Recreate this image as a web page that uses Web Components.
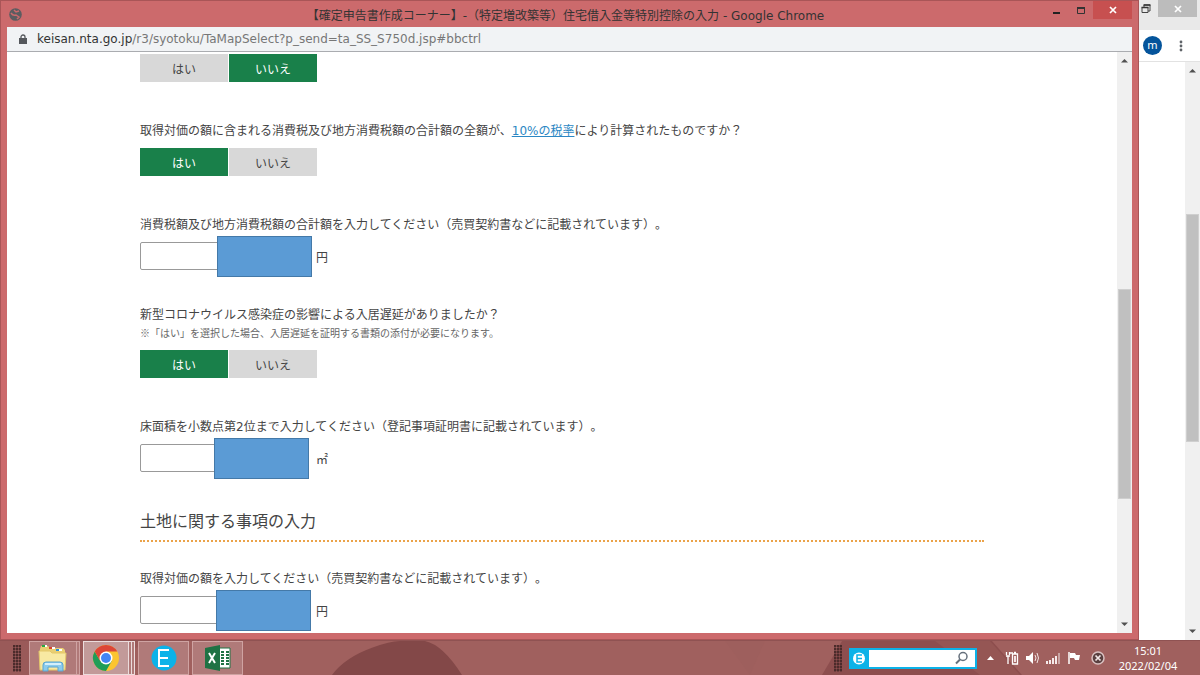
<!DOCTYPE html>
<html lang="ja">
<head>
<meta charset="utf-8">
<title>確定申告書作成コーナー</title>
<style>
    html, body {
        height: 100%;
        margin: 0;
        overflow: hidden;
    }

    body {
        display: flex;
        flex-direction: column;
        font-family: "DejaVu Sans", "Noto Sans CJK JP", sans-serif;
        font-size: 12px;
        text-spacing-trim: space-all;
        text-autospace: no-autospace;
        color: #444;
    }

    main {
        flex: 1;
        min-height: 0;
        display: flex;
    }
</style>
</head>
<body>
<main>
    <popup-window>
        <span slot="title">【確定申告書作成コーナー】-（特定増改築等）住宅借入金等特別控除の入力 - Google Chrome</span>
        <span slot="host">keisan.nta.go.jp</span>
        <span slot="path">/r3/syotoku/TaMapSelect?p_send=ta_SS_S750d.jsp#bbctrl</span>
        <yes-no value="no"></yes-no>
        <yes-no value="yes">取得対価の額に含まれる消費税及び地方消費税額の合計額の全額が、<text-link>10%の税率</text-link>により計算されたものですか？</yes-no>
        <amount-field unit="円" style="--cover: 77px">消費税額及び地方消費税額の合計額を入力してください（売買契約書などに記載されています）。</amount-field>
        <yes-no value="yes">新型コロナウイルス感染症の影響による入居遅延がありましたか？<span slot="note">※「はい」を選択した場合、入居遅延を証明する書類の添付が必要になります。</span></yes-no>
        <amount-field unit="㎡" style="--cover: 74px">床面積を小数点第2位まで入力してください（登記事項証明書に記載されています）。</amount-field>
        <section-title>土地に関する事項の入力</section-title>
        <amount-field unit="円" style="--cover: 76px">取得対価の額を入力してください（売買契約書などに記載されています）。</amount-field>
    </popup-window>
    <back-window></back-window>
</main>
<task-bar>
    <task-button stack="1" label="エクスプローラー">
        <svg width="32" height="28" viewBox="0 0 32 28">
            <path d="M3 5l1-3h7l2 2h13l2 2v19H3z" fill="#e9cf72"/>
            <path d="M5 2h5M12 4h6M19 6h6" stroke="#fff" stroke-width="2"/>
            <path d="M5 2h3" stroke="#27a844" stroke-width="2"/>
            <path d="M12 4h3" stroke="#d8432f" stroke-width="2"/>
            <path d="M19 6h3" stroke="#2c8fdc" stroke-width="2"/>
            <path d="M2 7h11l2 2h14l-1 17H3z" fill="#f8e9a2" stroke="#e3c768"/>
            <path d="M6 27v-6q0-3 3-3h14q3 0 3 3v6h-5v-4H11v4z" fill="#8bcbec" stroke="#5aa5d0"/>
            <path d="M8 20h16" stroke="#d3effb" stroke-width="2"/>
        </svg>
    </task-button>
    <task-button stack="2" active label="Google Chrome">
        <svg width="28" height="28" viewBox="0 0 28 28">
            <circle cx="14" cy="14" r="13" fill="#fbc530"/>
            <path d="M2.700 7.500A13 13 0 0 0 14 27l5.600-9.700L14 14 8.400 17.300z" fill="#1f9d58"/>
            <path d="M2.700 7.500A13 13 0 0 1 25.300 7.500H14L8.400 17.300z" fill="#dc4637"/>
            <circle cx="14" cy="14" r="6.500" fill="#fff"/>
            <circle cx="14" cy="14" r="5" fill="#4385f4"/>
        </svg>
    </task-button>
    <task-button label="E">
        <svg width="26" height="26" viewBox="0 0 26 26">
            <circle cx="13" cy="13" r="12.500" fill="#0cb2e8"/>
            <path d="M18 5H8v16h10M8 13h9" fill="none" stroke="#fff" stroke-width="2"/>
        </svg>
    </task-button>
    <task-button label="Excel">
        <svg width="28" height="28" viewBox="0 0 28 28">
            <path d="M14 4h12v20H14z" fill="#fff" stroke="#1f7244"/>
            <path d="M17 8h3M22 8h3M17 11h3M22 11h3M17 14h3M22 14h3M17 17h3M22 17h3M17 20h3M22 20h3" stroke="#1f7244" stroke-width="2"/>
            <path d="M1 4l15-3v26L1 24z" fill="#1f7244"/>
            <path d="M5 9l6 10M11 9L5 19" stroke="#fff" stroke-width="2"/>
        </svg>
    </task-button>
</task-bar>

<script>
function define(name, html, setup) {
    const template = document.createElement('template');
    template.innerHTML = html;

    window.customElements.define(name, class extends HTMLElement {
        constructor() {
            super();
            this.attachShadow({mode: 'open'})
            this.shadowRoot.appendChild(template.content.cloneNode(true))
        }

        connectedCallback() {
            if (setup) setup(this, this.shadowRoot);
        }
    });
}

// before / size / after are the shares of the track
define('scroll-bar', `
    <style>
        :host {
            display: flex;
            flex-direction: column;
            align-items: center;
            box-sizing: border-box;
            flex: 0 0 15px;
            padding: 6px 0;
            background: #f0f0f0;
        }
        svg { display: block; }
        .track {
            flex: 1;
            display: flex;
            flex-direction: column;
            align-self: stretch;
            padding: 2px 1px;
        }
        .thumb { background: #c0c0c0; border: 1px solid #cfcfcf; box-sizing: border-box; }
    </style>
    <svg width="7" height="5"><path d="M0 4.500L3.500 1 7 4.500z" fill="#505050"/></svg>
    <div class="track"><div class="before"></div><div class="thumb"></div><div class="after"></div></div>
    <svg width="7" height="5"><path d="M0 .5L3.500 4 7 .5z" fill="#505050"/></svg>
`, (el, root) => {
    root.querySelector('.before').style.flex = el.getAttribute('before');
    root.querySelector('.thumb').style.flex = el.getAttribute('size');
    root.querySelector('.after').style.flex = el.getAttribute('after');
});

define('text-link', `<style>a { color: #2b87c4; text-decoration: underline; }</style><a href="#"><slot></slot></a>`);

define('yes-no', `
    <style>
        :host { display: block; margin-bottom: 40px; }
        .question, .note { line-height: 18px; }
        .note { font-family: "Noto Sans CJK JP", sans-serif; font-size: 10px; color: #666; }
        .buttons { display: flex; gap: 1px; }
        .question + .note + .buttons { margin-top: 8px; }
        :host(:empty) .buttons { margin-top: 0; }
        button {
            width: 88px;
            height: 28px;
            padding: 0;
            border: 0;
            background: #d8d8d8;
            color: #444;
            font: inherit;
        }
        button.on { background: #19804a; color: #fff; }
    </style>
    <div class="question" id="question"><slot></slot></div>
    <div class="note"><slot name="note"></slot></div>
    <div class="buttons" role="group" aria-labelledby="question">
        <button type="button" data-value="yes">はい</button>
        <button type="button" data-value="no">いいえ</button>
    </div>
`, (el, root) => {
    const buttons = root.querySelectorAll('button');
    const select = value => {
        buttons.forEach(b => {
            b.classList.toggle('on', b.dataset.value === value);
            b.setAttribute('aria-pressed', b.dataset.value === value);
        })
    }
    buttons.forEach(b => b.addEventListener('click', () => select(b.dataset.value)));
    select(el.getAttribute('value'));
});

define('amount-field', `
    <style>
        :host { display: block; margin-bottom: 36px; }
        label { display: block; line-height: 18px; margin-bottom: 8px; }
        .row { position: relative; display: flex; align-items: center; gap: 7px; }
        input {
            box-sizing: border-box;
            width: 169px;
            height: 28px;
            border: 1px solid #999;
            border-radius: 2px;
            font: inherit;
        }
        .cover {
            position: absolute;
            left: var(--cover);
            top: -6px;
            box-sizing: border-box;
            width: 95px;
            height: 41px;
            background: #5b9bd5;
            border: 1px solid #4479a8;
        }
    </style>
    <label for="amount"><slot></slot></label>
    <div class="row">
        <input id="amount" type="text">
        <span class="unit"></span>
        <div class="cover"></div>
    </div>
`, (el, root) => {
    root.querySelector('.unit').textContent = el.getAttribute('unit');
});

define('section-title', `
    <style>
        :host { display: block; margin-bottom: 28px; }
        h2 {
            margin: 0;
            padding-bottom: 4px;
            border-bottom: 2px dotted #eba34a;
            font-size: 16px;
            font-weight: 400;
            line-height: 28px;
        }
    </style>
    <h2><slot></slot></h2>
`);

define('popup-window', `
    <style>
        :host {
            flex: 1;
            min-width: 0;
            display: flex;
            flex-direction: column;
            box-sizing: border-box;
            padding: 0 6px 6px;
            background: #cc6a6c;
            border: 1px solid #a95557;
        }
        header { display: flex; flex: 0 0 26px; align-items: center; color: #333; }
        header h1 {
            flex: 1;
            margin: 0;
            padding-left: 64px;
            font-size: 12px;
            font-weight: 400;
            text-align: center;
            white-space: nowrap;
        }
        .controls { display: flex; align-self: flex-start; }
        .controls button { width: 24px; height: 18px; padding: 0; border: 0; background: none; }
        .controls .close { width: 39px; background: #c75050; }
        svg { display: block; margin: auto; }
        header > svg { margin: 0 0 0 2px; }
        .address {
            display: flex;
            align-items: center;
            flex: 0 0 24px;
            padding-left: 12px;
            gap: 10px;
            background: #f1f3f5;
            border-bottom: 1px solid #aaacb0;
            font-size: 12px;
            color: #333;
        }
        .address svg { margin: 0; }
        .address .path { color: #777; }
        .view { flex: 1; min-height: 0; display: flex; background: #fff; }
        .page { flex: 1; overflow: hidden; }
        .column { max-width: 844px; margin: 0 auto; padding-top: 2px; }
    </style>
    <header>
        <svg width="13" height="13" viewBox="0 0 13 13">
            <circle cx="6.500" cy="6.500" r="6.300" fill="#5c5c60"/>
            <path d="M2 5q2 3 5 2l3 2-2 2M5 2l2 2 3-1" fill="none" stroke="#cc6a6c" stroke-width="1.500"/>
        </svg>
        <h1><slot name="title"></slot></h1>
        <div class="controls">
            <button type="button" aria-label="最小化"><svg width="10" height="10"><path d="M1 7h7v2H1z" fill="#222"/></svg></button>
            <button type="button" aria-label="最大化"><svg width="10" height="10"><path d="M1.500 2.500h7v6h-7z" fill="none" stroke="#333"/><path d="M1 3h8" stroke="#333" stroke-width="2"/></svg></button>
            <button type="button" class="close" aria-label="閉じる"><svg width="8" height="8"><path d="M1 1l6 6M7 1L1 7" stroke="#fff" stroke-width="1.700"/></svg></button>
        </div>
    </header>
    <div class="address">
        <svg width="8" height="11" viewBox="0 0 8 11"><path d="M2 4V3a2 2 0 0 1 4 0v1" fill="none" stroke="#55585c" stroke-width="1.300"/><path d="M0 4h8v6H0z" fill="#55585c"/></svg>
        <div><slot name="host"></slot><span class="path"><slot name="path"></slot></span></div>
    </div>
    <div class="view">
        <div class="page"><div class="column"><slot></slot></div></div>
        <scroll-bar before="223" size="207" after="121"></scroll-bar>
    </div>
`);

define('back-window', `
    <style>
        :host { flex: 0 0 61px; display: flex; flex-direction: column; background: #fff; }
        header { display: flex; flex: 0 0 30px; align-items: flex-start; background: #e9e9e9; }
        button { height: 17px; padding: 0; border: 0; background: none; }
        svg { display: block; margin: auto; }
        .restore { width: 19px; padding-right: 5px; }
        .close { width: 39px; background: #bcbcbc; }
        nav {
            display: flex;
            flex: 0 0 31px;
            align-items: center;
            gap: 16px;
            padding-left: 4px;
            border-bottom: 1px solid #e2e2e2;
        }
        .avatar {
            width: 19px;
            height: 19px;
            border-radius: 50%;
            background: #04549b;
            color: #fff;
            font-family: "Noto Sans", sans-serif;
            font-size: 11px;
            line-height: 18px;
            text-align: center;
        }
        .menu { width: 6px; }
        .view { flex: 1; display: flex; justify-content: flex-end; }
    </style>
    <header>
        <button type="button" class="restore" aria-label="元に戻す"><svg width="10" height="10"><path d="M3 3V1h6v6H7" fill="none" stroke="#444"/><path d="M1 3.500h6v5H1z" fill="none" stroke="#444"/><path d="M.5 3.500h7M2.500 1h7" stroke="#333" stroke-width="1.500"/></svg></button>
        <button type="button" class="close" aria-label="閉じる"><svg width="8" height="8"><path d="M1 1l6 6M7 1L1 7" stroke="#fff" stroke-width="1.700"/></svg></button>
    </header>
    <nav>
        <div class="avatar">m</div>
        <button type="button" class="menu" aria-label="メニュー"><svg width="4" height="12"><g fill="#5f6368"><circle cx="2" cy="2" r="1.400"/><circle cx="2" cy="6" r="1.400"/><circle cx="2" cy="10" r="1.400"/></g></svg></button>
    </nav>
    <div class="view"><scroll-bar before="138" size="225" after="184"></scroll-bar></div>
`);

define('task-button', `
    <style>
        :host { display: flex; padding-right: 3px; }
        button {
            width: 51px;
            height: 34px;
            padding: 0;
            border: 1px solid #cfa3a2;
            background: #b07a79;
        }
        :host([stack="1"]) button { width: 48px; }
        :host([stack="2"]) button { width: 46px; }
        :host([active]) button { border-color: #ecdcdc; background: #c29a99; }
        i { box-sizing: border-box; width: 3px; border: solid #cfa3a2; border-width: 1px 1px 1px 0; background: #b07a79; }
        :host([active]) i { border-color: #ecdcdc; }
        div { display: flex; justify-content: center; }
    </style>
    <button type="button"><div><slot></slot></div></button>
`, (el, root) => {
    root.querySelector('button').setAttribute('aria-label', el.getAttribute('label'));
    for (let i = 0; i < Number(el.getAttribute('stack')); i++) {
        root.appendChild(document.createElement('i'));
    }
});

define('task-bar', `
    <style>
        :host {
            position: relative;
            flex: 0 0 35px;
            display: flex;
            align-items: center;
            overflow: hidden;
            background: #a0605e;
            border-top: 1px solid #8f5252;
            box-sizing: border-box;
            color: #fff;
            font-family: "Noto Sans", sans-serif;
        }
        .wallpaper { position: absolute; inset: 0; width: 100%; height: 100%; }
        .apps, .tray { position: relative; display: flex; align-items: center; }
        .apps { flex: 1; }
        .grip {
            width: 8px;
            height: 27px;
            background-image: radial-gradient(circle at 1px 1px, #4c2b2b 1px, transparent 2px);
            background-size: 3px 3px;
        }
        .apps .grip { margin: 0 8px 0 13px; }
        .tray .grip { margin-right: 7px; }
        .search {
            display: flex;
            align-items: center;
            box-sizing: border-box;
            width: 128px;
            height: 21px;
            border: 2px solid #0cb2e8;
            background: #fff;
        }
        .search > svg { flex: none; }
        .search .logo { background: #0cb2e8; }
        input { flex: 1; min-width: 0; padding: 0; border: 0; background: none; outline: 0; }
        .search button { width: 20px; height: 17px; padding: 0; border: 0; background: none; }
        .icons { display: flex; align-items: center; gap: 6px; padding-left: 10px; }
        .icons .more { margin-right: 5px; }
        .icons .status { margin-left: 4px; }
        svg { display: block; }
        time { width: 78px; margin: 0 13px 0 4px; font-size: 11px; line-height: 15px; text-align: center; }
    </style>
    <svg class="wallpaper" viewBox="0 0 1200 35" preserveAspectRatio="none">
        <path d="M0 0h150L80 35H0z" fill="#9a5a59"/>
        <path d="M332 35Q345 17 372 7 390 0 400 0h25q18 4 37 35z" fill="#834848"/>
        <path d="M822 35l20-35h150l30 35z" fill="#8d4e4e"/>
        <path d="M935 0h55l30 35h-40z" fill="#955654"/>
        <path d="M725 0h40l-15 35z" fill="#9e5f5d"/>
    </svg>
    <div class="apps"><div class="grip"></div><slot></slot></div>
    <div class="tray">
        <div class="grip"></div>
        <div class="search">
            <svg class="logo" width="18" height="17"><circle cx="8" cy="8.500" r="6" fill="#fff"/><path d="M11 5H6v7h5M6 8.500h5" fill="none" stroke="#0cb2e8" stroke-width="1.500"/></svg>
            <input type="text" aria-label="検索">
            <button type="button" aria-label="検索する"><svg width="14" height="14"><circle cx="8" cy="5.500" r="4" fill="none" stroke="#66707c" stroke-width="1.500"/><path d="M5 8.500L1 12.500" stroke="#66707c" stroke-width="2"/></svg></button>
        </div>
        <div class="icons">
            <svg class="more" width="7" height="4"><path d="M0 4l3.500-4L7 4z" fill="#fff"/></svg>
            <svg width="15" height="14" viewBox="0 0 15 14"><path d="M3 5v8M1.500 1v3M4.500 1v3M1 5h4M5 2h3" fill="none" stroke="#fff" stroke-width="1.300"/><path d="M7.500 3h5v10h-5zM9 1.500h2" fill="none" stroke="#fff" stroke-width="1.300"/><path d="M9 5h2v6H9z" fill="#f3e4e4"/></svg>
            <svg width="14" height="14" viewBox="0 0 14 14"><path d="M0 5h3l4-4v12L3 9H0z" fill="#fff"/><path d="M9 4q2 3 0 6M11 2q3 5 0 10" fill="none" stroke="#f3e4e4"/></svg>
            <svg width="15" height="14" viewBox="0 0 15 14"><path d="M1 13v-3M4 13V9M7 13V7M10 13V5" stroke="#f5eaea" stroke-width="2"/><path d="M13 13V2" stroke="#c9a5a4" stroke-width="2"/></svg>
            <svg width="14" height="14" viewBox="0 0 14 14"><path d="M2 1v12" stroke="#fff" stroke-width="1.500"/><path d="M3 2h5l1 2h4l-1 5H8L7 7H3z" fill="#fff"/></svg>
            <svg class="status" width="14" height="14" viewBox="0 0 14 14"><circle cx="7" cy="7" r="6" fill="#5a4040" stroke="#d9c0c0" stroke-width="1.500"/><path d="M4.500 4.500l5 5M9.500 4.500l-5 5" stroke="#f2e6e6" stroke-width="1.700"/></svg>
        </div>
        <time>15:01<br>2022/02/04</time>
    </div>
`);
</script>
</body>
</html>
